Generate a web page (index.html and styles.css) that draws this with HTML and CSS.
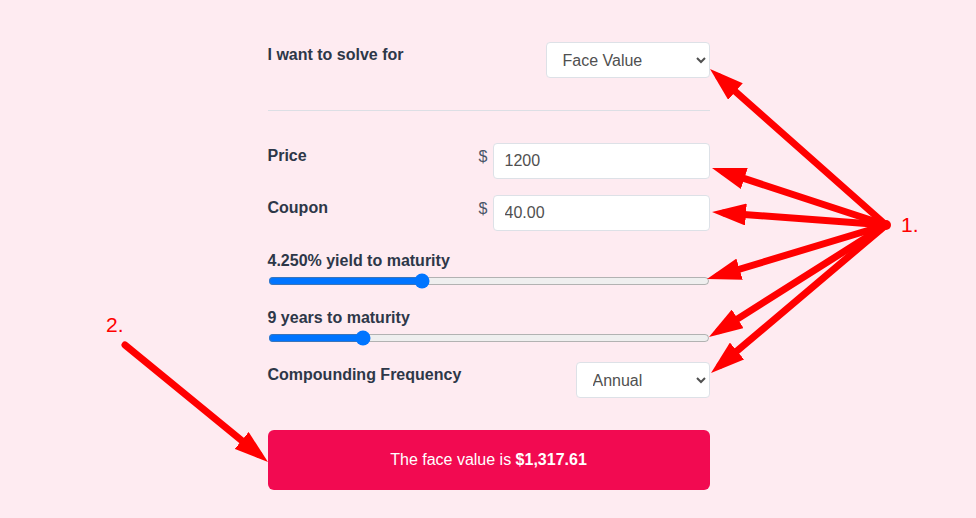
FILE: index.html
```html
<!DOCTYPE html>
<html lang="en">
<head>
    <meta charset="UTF-8">
    <meta name="viewport" content="width=device-width, initial-scale=1.0">
    <title>Bond Calculator</title>
    <link rel="stylesheet" href="styles.css">
</head>
<body>

    <div class="calc">
        <div class="row">
            <label class="field-label" for="solveFor">I want to solve for</label>
            <select id="solveFor" class="select select-wide">
                <option value="face">Face Value</option>
                <option value="price">Price</option>
                <option value="coupon">Coupon</option>
                <option value="yield">Yield</option>
            </select>
        </div>

        <hr class="divider">

        <div class="row">
            <label class="field-label" for="price">Price</label>
            <div class="money">
                <span class="currency">$</span>
                <input type="text" id="price" class="input" value="1200">
            </div>
        </div>

        <div class="row row-tight">
            <label class="field-label" for="coupon">Coupon</label>
            <div class="money">
                <span class="currency">$</span>
                <input type="text" id="coupon" class="input" value="40.00">
            </div>
        </div>

        <div class="slider-group">
            <label class="slider-label" for="ytm">4.250% yield to maturity</label>
            <input type="range" id="ytm" class="slider" min="0" max="12.35" step="0.05" value="4.25">
        </div>

        <div class="slider-group slider-group-next">
            <label class="slider-label" for="years">9 years to maturity</label>
            <input type="range" id="years" class="slider" min="1" max="40" step="1" value="9">
        </div>

        <div class="row row-compounding">
            <label class="field-label" for="frequency">Compounding Frequency</label>
            <select id="frequency" class="select select-narrow">
                <option value="1">Annual</option>
                <option value="2">Semi-Annual</option>
                <option value="4">Quarterly</option>
                <option value="12">Monthly</option>
            </select>
        </div>

        <div class="result">The face value is&nbsp;<strong>$1,317.61</strong></div>
    </div>

    <svg class="callouts" width="976" height="518" viewBox="0 0 976 518">
        <defs>
            <marker id="head" markerUnits="userSpaceOnUse" markerWidth="34" markerHeight="22"
                    viewBox="0 0 34 22" refX="22" refY="11" orient="auto">
                <path d="M0 0 L34 11 L0 22 Z" fill="#ff0000"/>
            </marker>
        </defs>
        <g stroke="#ff0000" stroke-width="7" stroke-linecap="round" fill="none">
            <line x1="886" y1="225" x2="719" y2="77" marker-end="url(#head)"/>
            <line x1="886" y1="225" x2="723.4" y2="171.7" marker-end="url(#head)"/>
            <line x1="886" y1="225" x2="724" y2="212.9" marker-end="url(#head)"/>
            <line x1="886" y1="225" x2="718.5" y2="275.5" marker-end="url(#head)"/>
            <line x1="886" y1="225" x2="719.1" y2="330.6" marker-end="url(#head)"/>
            <line x1="886" y1="225" x2="720.2" y2="365.2" marker-end="url(#head)"/>
            <line x1="125" y1="345" x2="258.7" y2="454.4" marker-end="url(#head)"/>
        </g>
        <circle cx="886" cy="225" r="5" fill="#ff0000"/>
        <text class="callout-num" x="901" y="232">1.</text>
        <text class="callout-num" x="106" y="332">2.</text>
    </svg>

</body>
</html>
```

FILE: styles.css
```css
body {
    font-family: "Liberation Sans", Arial, sans-serif;
    background-color: #feebf1;
    color: #2d3748;
    margin: 0;
    padding: 0 0 0 1px;
    position: relative;
    min-height: 518px;
}

.calc {
    width: 442px;
    margin: 0 auto;
    padding-top: 42px;
}

.row {
    display: flex;
    justify-content: space-between;
    align-items: flex-start;
}

.row-tight {
    margin-top: 16px;
}

.row-compounding {
    margin-top: 16px;
}

.field-label,
.slider-label {
    display: block;
    font-size: 16px;
    line-height: 18px;
    font-weight: bold;
}

.field-label {
    padding-top: 4px;
}

.select {
    height: 36px;
    font-family: inherit;
    font-size: 16px;
    color: #505050;
    background-color: #fff;
    border: 1px solid #dde1e7;
    border-radius: 4px;
    padding: 0 8px 0 12px;
    margin: 0;
}

.select-wide {
    width: 164px;
}

.select-narrow {
    width: 134px;
}

.divider {
    border: 0;
    border-top: 1px solid #dcdfe5;
    margin: 32px 0;
}

.money {
    display: flex;
    align-items: flex-start;
}

.currency {
    font-size: 16px;
    line-height: 18px;
    padding-top: 5px;
    margin-right: 5px;
    color: #4a5568;
}

.input {
    width: 217px;
    height: 36px;
    box-sizing: border-box;
    font-family: inherit;
    font-size: 16px;
    color: #505050;
    background-color: #fff;
    border: 1px solid #dde1e7;
    border-radius: 4px;
    padding: 0 11px;
    margin: 0;
}

.slider-group {
    margin-top: 21px;
}

.slider-group-next {
    margin-top: 20px;
}

.slider {
    display: block;
    width: 100%;
    height: 16px;
    margin: 3px 0 0;
}

.result {
    margin-top: 32px;
    height: 60px;
    border-radius: 6px;
    background-color: #f20a51;
    color: #fff;
    font-size: 16px;
    display: flex;
    justify-content: center;
    align-items: center;
}

.callouts {
    position: absolute;
    top: 0;
    left: 0;
    pointer-events: none;
}

.callout-num {
    font-family: "Liberation Sans", Arial, sans-serif;
    font-size: 21px;
    fill: #ff0000;
}
```
